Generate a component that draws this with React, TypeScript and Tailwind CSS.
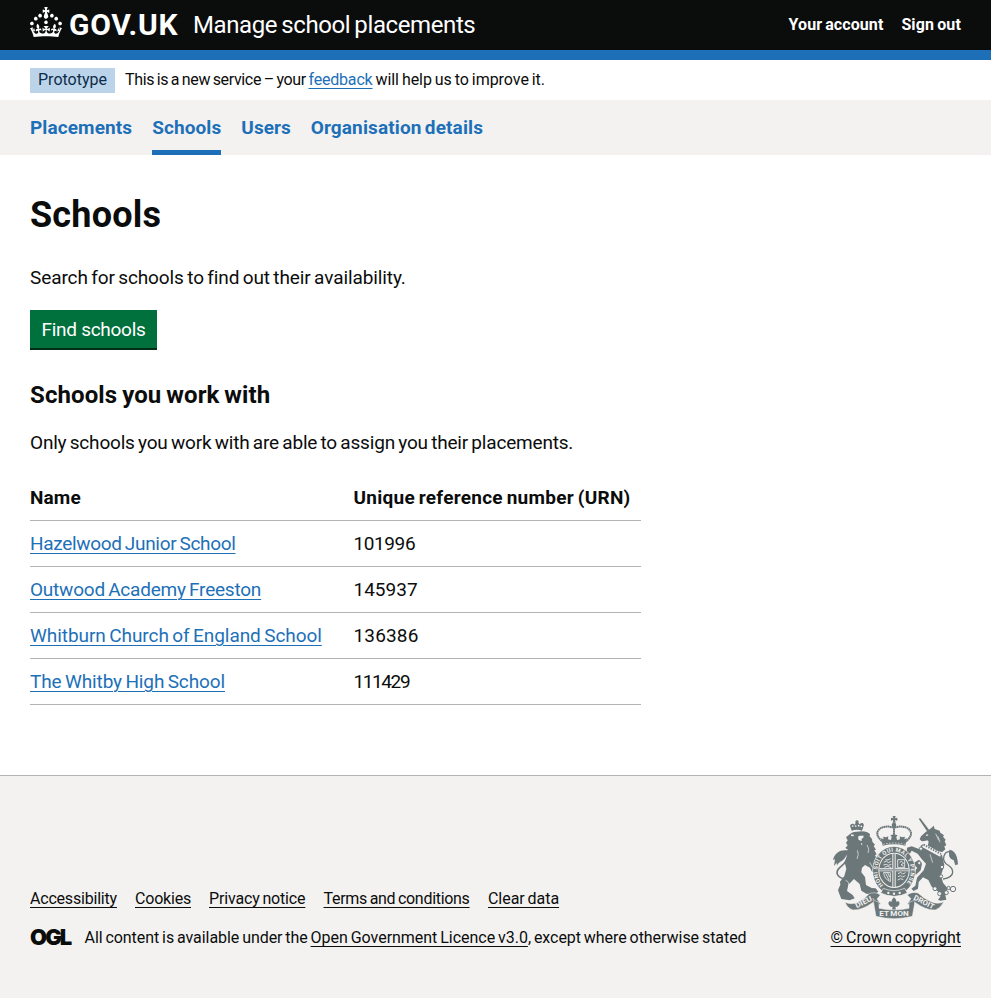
import React from 'react';

const INK = '#6c777a';
const PAPER = '#f3f2f1';

function Crown() {
  return (
    <svg viewBox="0 0 32 30" className="h-[30px] w-8 shrink-0" fill="currentColor" aria-hidden="true">
      <path d="M22.6 10.4c-1 .4-2-.1-2.4-1-.4-.9.1-2 1-2.4.9-.4 2 .1 2.4 1s-.1 2-1 2.4m4.3 3c-1 .4-2-.1-2.4-1-.4-.9.1-2 1-2.4.9-.4 2 .1 2.4 1s0 2-1 2.4m3.9 4.8c-1 .4-2-.1-2.4-1-.4-.9.1-2 1-2.4.9-.4 2 .1 2.4 1s-.1 2-1 2.4M16.7 17.1c-.9.4-2-.1-2.4-1-.4-.9.1-2 1-2.4.9-.4 2 .1 2.4 1s-.1 2-1 2.4M17 4.7l2.3 1.2V2.5l-2.3.7-.2-.2.9-3h-3.4l.9 3-.2.2c-.1.1-2.3-.7-2.3-.7v3.4L15 4.7c.1.1.1.2.2.2l-1.3 4c-.1.2-.1.4-.1.6 0 1.1.8 2 1.9 2.2h.7c1-.2 1.9-1.1 1.9-2.1 0-.2 0-.4-.1-.6l-1.3-4c-.1-.2 0-.2.1-.3m-7.6 5.7c.9.4 2-.1 2.4-1 .4-.9-.1-2-1-2.4-.9-.4-2 .1-2.4 1s0 2 1 2.4m-4.3 3c.9.4 2-.1 2.4-1 .4-.9-.1-2-1-2.4-.9-.4-2 .1-2.4 1s.1 2 1 2.4m-3.9 4.8c.9.4 2-.1 2.4-1 .4-.9-.1-2-1-2.4-.9-.4-2 .1-2.4 1s0 2 1 2.4m14.8 11c4.4 0 8.6.3 12.3.8 1.1-4.5 2.4-7 3.7-8.8l-2.5-.9c.2 1.3.3 1.9 0 2.7-.4-.4-.8-1.1-1.1-2.3l-1.2 4c.7-.5 1.3-.8 2-.9-1.1 2.5-2.6 3.1-3.5 3-1.1-.2-1.7-1.2-1.5-2.1.3-1.2 1.5-1.5 2.1-.1 1.1-2.3-.8-3-2-2.3 1.9-1.9 2.1-3.5.6-5.6-2.1 1.6-2.1 3.2-1.2 5.5-1.2-1.4-3.2-.6-2.5 1.6.9-1.4 2.1-.5 1.9.8-.2 1.1-1.7 2.1-3.5 1.9-2.7-.2-2.9-2.1-2.9-3.6.7-.1 1.9.5 2.9 1.9l.4-4.3c-1.1 1.1-2.1 1.4-3.2 1.4.4-1.2 2.1-3 2.1-3h-5.4s1.7 1.9 2.1 3c-1.1 0-2.1-.2-3.2-1.4l.4 4.3c1-1.4 2.2-2 2.9-1.9-.1 1.5-.2 3.4-2.9 3.6-1.9.2-3.4-.8-3.5-1.9-.2-1.3 1-2.2 1.9-.8.7-2.3-1.2-3-2.5-1.6.9-2.2.9-3.9-1.2-5.5-1.5 2-1.3 3.7.6 5.6-1.2-.7-3.1 0-2 2.3.6-1.4 1.8-1.1 2.1.1.2.9-.3 1.9-1.5 2.1-.9.2-2.4-.5-3.5-3 .6 0 1.2.3 2 .9l-1.2-4c-.3 1.1-.7 1.9-1.1 2.3-.3-.8-.2-1.4 0-2.7l-2.9.9C1.3 23 2.6 25.5 3.7 30c3.7-.5 7.9-.8 12.3-.8" />
    </svg>
  );
}

function Crest() {
  return (
    <svg viewBox="24 30 375 312" className="h-[104px] w-[125px]" fill={INK} aria-hidden="true">
      {/* lion */}
      <path d="M80 77l-5-15q2-7 9-6 3 1 5 3l3-6-2-4h4v-4h4v4h4l-2 4 4 5q4-5 9-4 5 3 3 9l-5 14q-15-6-31 0z" />
      <g fill={PAPER}>
        <circle cx="83" cy="63" r="2.6" /><circle cx="92" cy="63" r="2.6" /><circle cx="101" cy="62" r="2.6" /><circle cx="109" cy="64" r="2.6" />
      </g>
      <path d="M79 84q8-4 16-4 20-4 32 2l8 5-1 7 7 8 1 8 8 9-4 4 7 11-5 2 7 12-5 3 5 9-6 5 2 8 11 6 4 15-8 13-8-3-9-4-6-12-15-8-9 8-2 14 11 14 3 24 17 9 12 1 8 10-10 8-26-2-15-9-5-20-17-15-17 17-4 19 17 12 6 10-15 6-25-4-6-15-4-12 7-16-1-9 13-17 6-22-4-15 2-13 4-10 1-8-7-3 9-8-8-5 7-8-5-7 5-8-5-9z" />
      <path d="M58 222C34 216 30 200 45 187C64 172 76 153 62 142" fill="none" stroke={INK} strokeWidth="5" />
      <path d="M66 136C48 133 29 142 24 165l6-2-3 20 8-10 1 9c5-14 17-11 26-27 7-9 9-13 4-19z" />
      <path d="M103 92l13 0-1 6-5 3 0 7-9-3-2-9z M79 88l9 2-4 4-6-1z M108 114l5 3-5 3z" fill={PAPER} />
      <path d="M97 136q6 12-1 26M126 120q9 12 3 24M62 226q12 4 9 20M134 172l8 14" fill="none" stroke={PAPER} strokeWidth="2" />

      {/* unicorn */}
      <path d="M281 41l5-1 26 34-6 5z" />
      <path d="M303 80l16-11 7-7 3 10 15 5 2 6 11 8-3 4 8 9-3 5 5 12-6 3 3 9-9 8-14-2-30-16 3-13-4-4-8 2-9 1-6-6 4-9z" />
      <path d="M298 121l37 17 16 12 7 31-10 30 6 22 13 16-6 22 3 13-18 3-7-3 7-9-4-13-22-17-10-20-16-8-13 14-2 20-13 7-7-7 12-9 5-24 20-22 7-20-13-14-12-16-18-9-6 10-9-3 1-16 14-4 22 8 7 7-2-17 9-6z" />
      <path d="M266 174l16-10 9 12-4 20-14 13-10-6 14-14-5-5-7 2z" />
      <path d="M354 222C394 216 388 190 364 177C350 166 355 140 374 140C390 143 394 159 394 176" fill="none" stroke={INK} strokeWidth="4" />
      <path d="M373 134c18 2 25 21 26 44l-8 3-5-16c-9-1-14-9-14-18z" />
      <path d="M294 121l54 29" stroke={PAPER} strokeWidth="12" />
      <path d="M296 119l52 28" stroke={INK} strokeWidth="6" strokeDasharray="4 4" />
      <path d="M302 90l7-2 1 3-6 2z" fill={PAPER} />
      <path d="M332 86l9 20M339 94l6 18M315 148l8 25" fill="none" stroke={PAPER} strokeWidth="2" />
      <g fill={PAPER} stroke={INK} strokeWidth="3">
        <circle cx="288" cy="131" r="5" /><circle cx="283" cy="174" r="5" /><circle cx="351" cy="186" r="5" />
        <circle cx="348" cy="214" r="5" /><circle cx="330" cy="251" r="6" /><circle cx="344" cy="266" r="6" />
        <circle cx="364" cy="263" r="6" /><circle cx="371" cy="249" r="5" /><circle cx="384" cy="252" r="8" />
      </g>

      {/* royal crown */}
      <path d="M203 33h9l-2 7 7-2v9l-7-2 2 8h-9l2-8-7 2v-9l7 2z" />
      <circle cx="207" cy="60" r="7" />
      <g fill="none" stroke={INK} strokeWidth="6" strokeDasharray="5 1">
        <path d="M204 68C188 60 159 66 157 84C156 95 166 103 172 110" />
        <path d="M210 68C226 60 256 66 258 84C259 95 249 103 243 110" />
        <path d="M207 66v34" />
      </g>
      <path d="M168 100l8 3-2-8 9 2 7-3-1 9 9 2 2-10-4-4 11-3 11 3-4 4 2 10 9-2-1-9 7 3 9-2-2 8 8-3-5 22q-34-8-68 0z" />
      <path d="M174 118q33-8 66 0" stroke={PAPER} strokeWidth="2" strokeDasharray="5 4" fill="none" />

      {/* garter and shield */}
      <ellipse cx="207" cy="197" rx="65" ry="74" fill={PAPER} />
      <ellipse cx="207" cy="197" rx="63" ry="72" />
      <path id="garter" d="M175 240.7A50 57 0 0 1 157 197A50 57 0 0 1 207 140A50 57 0 0 1 257 197A50 57 0 0 1 239 240.7" fill="none" />
      <text fill={PAPER} fontSize="17" fontWeight="700" className="font-['Roboto']">
        <textPath href="#garter" textLength="256">HONI SOIT QUI MAL Y PENSE</textPath>
      </text>
      <ellipse cx="207" cy="196" rx="47" ry="53" fill={PAPER} />
      <ellipse cx="207" cy="196" rx="44" ry="50" />
      <g stroke={PAPER} strokeWidth="2.5" fill="none">
        <path d="M176 172l8-4 6 5 9-4M175 180l9-2 6 3 9-3M178 187l9-3 12 4M181 164l8 1 8-4" />
        <path d="M218 164h21v24h-21zM224 172l6-3 6 6-8 4 8 5" />
        <path d="M176 202q1 20 20 28V203zM182 205l10 20M188 204l6 12" />
        <path d="M219 206l8-4 6 5 9-4M219 215l8-3 6 4 8-4M218 225l9-4 8 3" />
      </g>
      <path d="M207 146v100M163 194h88" stroke={PAPER} strokeWidth="10" />
      <path d="M207 146v100M163 194h88" stroke="#9aa2a4" strokeWidth="6" />
      <path d="M175 250q32 14 64 0l8 14q-38 20-80 0z" stroke={PAPER} strokeWidth="2" />
      <g fill={PAPER}><circle cx="190" cy="264" r="3.5" /><circle cx="207" cy="266" r="3.5" /><circle cx="224" cy="264" r="3.5" /></g>

      {/* fleur */}
      <path d="M207 277q12 11 4 21 1-10 10-9 7 8-4 16h-6l2 9h-12l2-9h-6q-11-8-4-16 9-1 10 9-8-10 4-21z" />

      {/* motto ribbons */}
      <g stroke={PAPER} strokeWidth="1.5">
        <path d="M60 292q20 9 41-2 20-9 33-25 20-5 32 5l-10 12 11 15-11 4q-6-12-14-8-29 22-58 22-16-4-24-23z" />
        <path d="M356 290q-20 10-41-1-20-9-36-25-20-5-32 6l11 11-11 16 11 4q6-12 14-8 29 22 58 22 16-4 26-25z" />
        <path d="M144 280q4 10 18 12l0 18q46 10 90 0v-18q14-2 18-12l-2 20-6 34q-56 14-109 0l-6-34z" />
      </g>
      <g fill={PAPER} fontWeight="700" className="font-['Roboto']">
        <text x="95" y="310" fontSize="22" textLength="54" lengthAdjust="spacingAndGlyphs" transform="rotate(-27 95 310)">DIEU</text>
        <text x="163" y="333" fontSize="23" textLength="88" lengthAdjust="spacingAndGlyphs">ET MON</text>
        <text x="264" y="283" fontSize="22" textLength="66" lengthAdjust="spacingAndGlyphs" transform="rotate(27 264 283)">DROIT</text>
      </g>
    </svg>
  );
}

const underline = 'underline decoration-1 underline-offset-[3px]';

const nav = [
  { label: 'Placements', cls: 'tracking-[0.1px]' },
  { label: 'Schools', cls: 'tracking-[0.1px] border-b-[5px] border-[#1d70b8]' },
  { label: 'Users', cls: 'tracking-[0.02px]' },
  { label: 'Organisation details', cls: 'tracking-[0.12px] [word-spacing:-1.5px]' },
];

const schools = [
  { name: 'Hazelwood Junior School', cls: 'tracking-[-0.32px]', urn: '101996', urnCls: 'tracking-[-0.4px]' },
  { name: 'Outwood Academy Freeston', cls: 'tracking-[-0.22px]', urn: '145937', urnCls: 'tracking-[0px]' },
  { name: 'Whitburn Church of England School', cls: 'tracking-[-0.06px]', urn: '136386', urnCls: 'tracking-[0.15px]' },
  { name: 'The Whitby High School', cls: 'tracking-[-0.11px]', urn: '111429', urnCls: 'tracking-[-1.4px]' },
];

const footerLinks = [
  { label: 'Accessibility', cls: 'w-[87px] tracking-[-0.2px]' },
  { label: 'Cookies', cls: 'w-14 tracking-[-0.2px]' },
  { label: 'Privacy notice', cls: 'w-[96.5px] tracking-[-0.16px]' },
  { label: 'Terms and conditions', cls: 'w-[146.5px] tracking-[-0.3px]' },
  { label: 'Clear data', cls: 'w-[71px] tracking-[-0.05px]' },
];

export default function App() {
  return (
    <div className="flex min-h-[998px] flex-col whitespace-nowrap bg-white font-['Roboto',sans-serif] text-[19px] leading-[25px] text-[#0b0c0c]">
      <header className="flex h-[60px] items-center justify-between border-b-[10px] border-[#1d70b8] bg-[#0b0c0c] px-[30px] text-white">
        <div className="flex items-center">
          <div className="flex h-[30px] items-center pb-[6px]">
            <Crown />
            <span className="ml-[5px] mt-[6px] w-[118px] pl-0.5 text-[30px] font-bold leading-[30px] tracking-[0.75px]">GOV.UK</span>
          </div>
          <span className="ml-2 text-2xl leading-[30px] tracking-[-0.39px] [word-spacing:-1.5px]">Manage school placements</span>
        </div>
        <div className="flex gap-[18px] text-base font-bold [word-spacing:-1px]">
          <a href="#" className="tracking-[0.08px]">Your account</a>
          <a href="#" className="tracking-[0.13px]">Sign out</a>
        </div>
      </header>

      <div className="flex h-10 items-center px-[30px] text-base">
        <strong className="mr-[10px] flex h-[25px] w-[85px] items-center justify-center bg-[#bbd4ea] font-normal text-[#0c2d4a]">Prototype</strong>
        <p className="[word-spacing:-1px]">
          <span className="tracking-[-0.35px]">This is a new service – your </span>
          <a href="#" className={`${underline} tracking-[-0.19px] text-[#1d70b8]`}>feedback</a>
          <span className="tracking-[-0.04px]"> will help us to improve it.</span>
        </p>
      </div>

      <nav className="flex h-[55px] gap-5 bg-[#f3f2f1] px-[30px] font-bold text-[#1d70b8]">
        {nav.map((n) => (
          <a key={n.label} href="#" className={`pt-[15px] ${n.cls}`}>{n.label}</a>
        ))}
      </nav>

      <main className="flex flex-1 flex-col items-start px-[30px] pt-10 [word-spacing:-1.2px]">
        <h1 className="text-4xl font-bold leading-10 tracking-[0.2px]">Schools</h1>
        <p className="mt-[30px] tracking-[-0.1px]">Search for schools to find out their availability.</p>
        <button className="mt-5 h-[38px] w-[127px] bg-[#00703c] tracking-[-0.27px] text-white shadow-[0_2px_0_#002d18]">Find schools</button>
        <h2 className="mt-8 text-2xl font-bold leading-[30px] tracking-[0.11px]">Schools you work with</h2>
        <p className="mt-5 tracking-[-0.19px]">Only schools you work with are able to assign you their placements.</p>
        <table className="mt-5 w-[611px] table-fixed border-separate border-spacing-0 text-left">
          <thead>
            <tr className="h-[46px]">
              <th className="w-[323px] border-b border-[#b1b4b6] tracking-[0.15px]">Name</th>
              <th className="border-b border-[#b1b4b6] pl-[0.5px] tracking-[0.27px]">Unique reference number (URN)</th>
            </tr>
          </thead>
          <tbody>
            {schools.map((s) => (
              <tr key={s.urn} className="h-[46px]">
                <td className="border-b border-[#b1b4b6]">
                  <a href="#" className={`${underline} text-[#1d70b8] ${s.cls}`}>{s.name}</a>
                </td>
                <td className={`border-b border-[#b1b4b6] pl-[0.5px] ${s.urnCls}`}>{s.urn}</td>
              </tr>
            ))}
          </tbody>
        </table>
      </main>

      <footer className="flex h-[223px] items-end justify-between border-t border-[#b1b4b6] bg-[#f3f2f1] px-[30px] pb-12 text-base [word-spacing:-1px]">
        <div>
          <div className="flex gap-[18px]">
            {footerLinks.map((l) => (
              <a key={l.label} href="#" className={`${underline} ${l.cls}`}>{l.label}</a>
            ))}
          </div>
          <div className="mt-[15px] flex items-center">
            <span className="-mt-[3px] w-[54.5px] font-['Inter'] text-[22px] font-black leading-[20px] tracking-[-1.9px]">OGL</span>
            <p>
              <span className="tracking-[-0.06px]">All content is available under the </span>
              <a href="#" className={`${underline} tracking-[-0.03px]`}>Open Government Licence v3.0</a>
              <span className="tracking-[-0.05px]">, except where otherwise stated</span>
            </p>
          </div>
        </div>
        <div className="flex flex-col items-center">
          <Crest />
          <a href="#" className={`${underline} mt-[7px]`}>© Crown copyright</a>
        </div>
      </footer>
    </div>
  );
}
